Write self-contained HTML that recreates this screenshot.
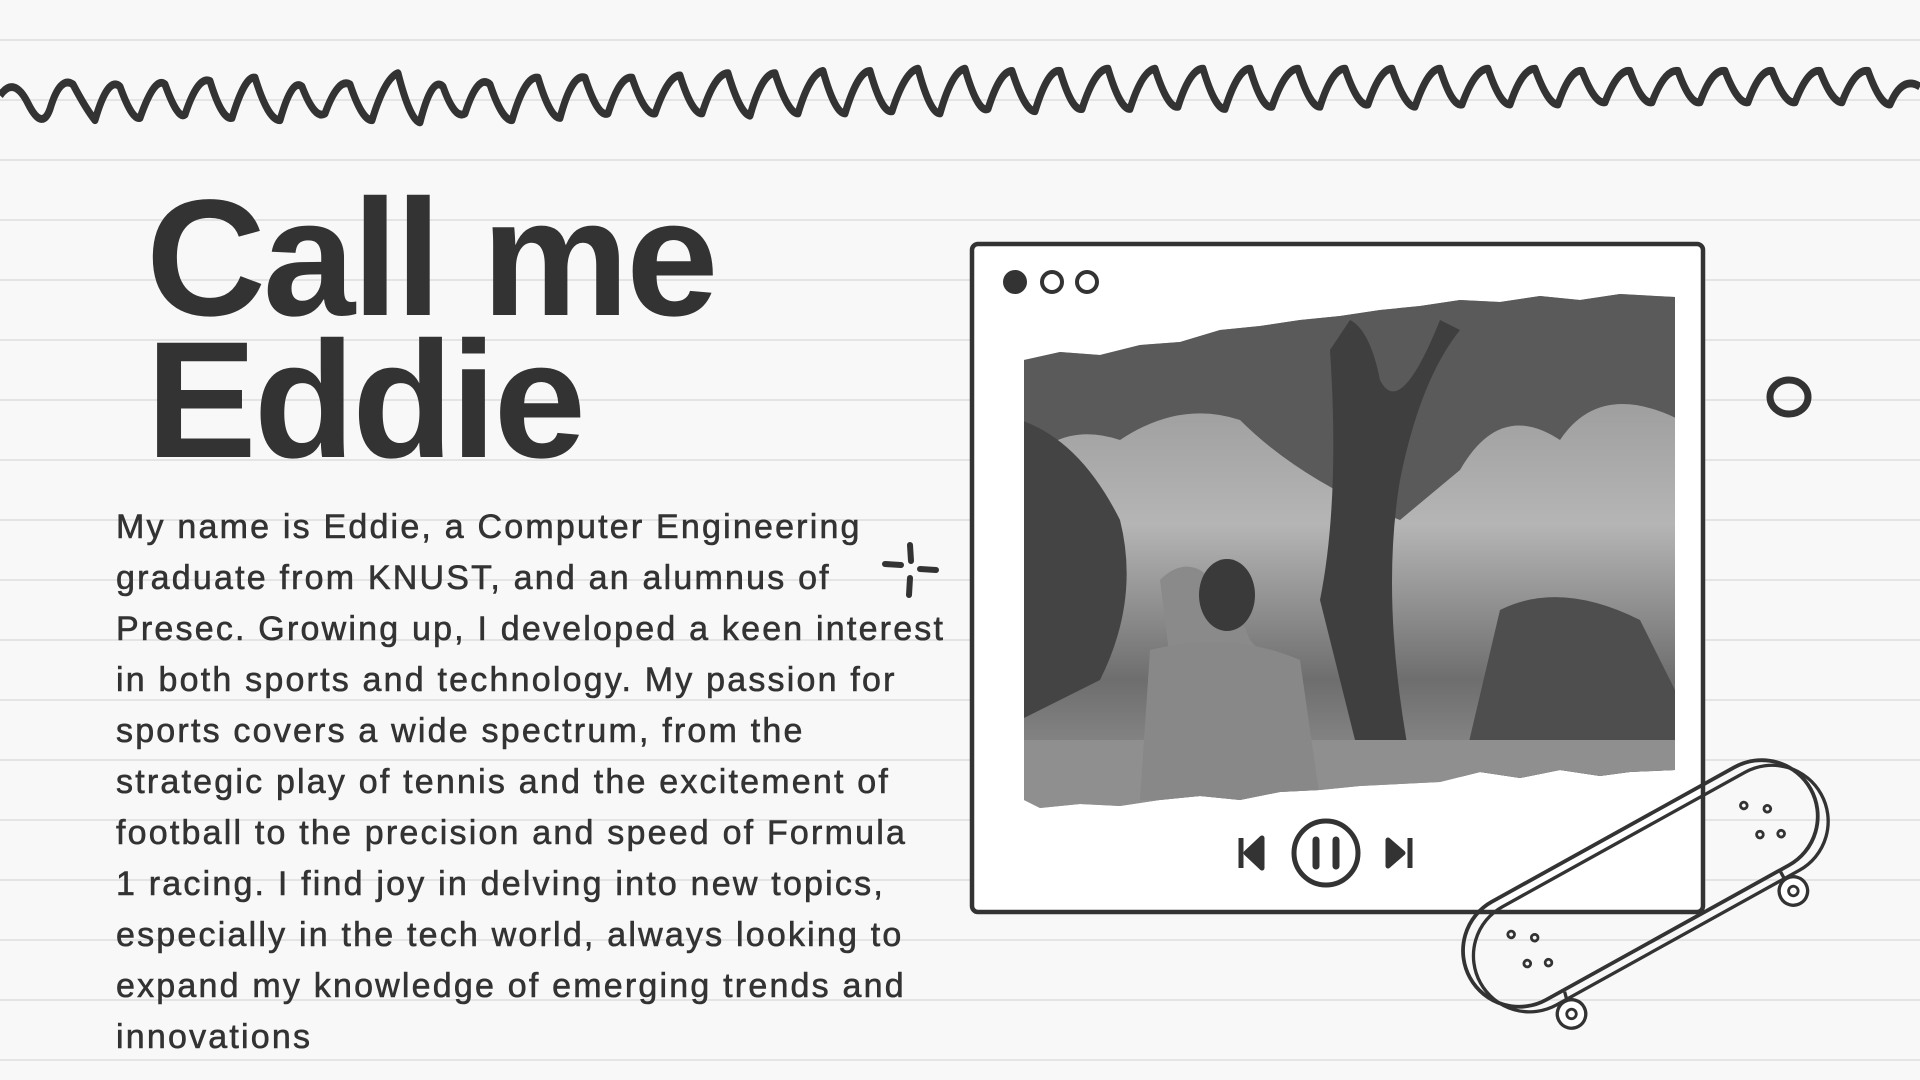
<!DOCTYPE html>
<html><head><meta charset="utf-8"><style>
html,body{margin:0;padding:0;}
body{width:1920px;height:1080px;position:relative;overflow:hidden;background:#f8f8f8;
background-image:repeating-linear-gradient(to bottom,transparent 0,transparent 39px,#e4e4e4 39px,#e4e4e4 41px,transparent 41px,transparent 60px);}
.t{position:absolute;left:146px;font-family:"Liberation Sans",sans-serif;font-weight:bold;color:#333;font-size:166px;letter-spacing:-3px;line-height:142px;top:188px;margin:0}
.b{position:absolute;left:116px;top:502px;font-family:"Liberation Sans",sans-serif;font-size:34px;line-height:51px;color:#333;letter-spacing:2.2px;white-space:nowrap;-webkit-text-stroke:0.6px #333}
svg{position:absolute;left:0;top:0}
</style></head><body>
<div class="t">Call me<br>Eddie</div>
<div class="b">My name is Eddie, a Computer Engineering<br>graduate from KNUST, and an alumnus of<br>Presec. Growing up, I developed a keen interest<br>in both sports and technology. My passion for<br>sports covers a wide spectrum, from the<br>strategic play of tennis and the excitement of<br>football to the precision and speed of Formula<br>1 racing. I find joy in delving into new topics,<br>especially in the tech world, always looking to<br>expand my knowledge of emerging trends and<br>innovations</div>
<svg width="1920" height="1080" viewBox="0 0 1920 1080">
<defs>
<linearGradient id="sky" x1="0" y1="0" x2="0" y2="1"><stop offset="0" stop-color="#8a8a8a"/><stop offset="0.45" stop-color="#b5b5b5"/><stop offset="0.75" stop-color="#6e6e6e"/><stop offset="1" stop-color="#9a9a9a"/></linearGradient>
<clipPath id="tear"><path d="M1024 360 L1060 352 L1100 355 L1140 345 L1180 342 L1220 330 L1260 326 L1300 320 L1340 316 L1380 310 L1420 306 L1460 300 L1500 302 L1540 296 L1580 300 L1620 294 L1675 297 L1675 770 L1630 772 L1600 776 L1560 770 L1520 778 L1480 772 L1440 782 L1400 784 L1360 786 L1320 790 L1280 792 L1240 800 L1200 796 L1160 800 L1120 806 L1080 804 L1040 808 L1024 800 Z"/></clipPath>
</defs>
<g transform="translate(0 -3) scale(1 1.12)">
<path fill="none" stroke="#333" stroke-width="7" stroke-linejoin="round" d="M0 88 Q14 70 28 95 Q42 120 50 100 Q60 70 73 78 Q86 100 95 110 Q108 70 120 80 Q132 110 140 108 Q155 70 165 78 Q178 110 185 105 Q198 70 210 75 Q222 110 232 108 Q245 70 255 72 Q268 110 280 110 Q292 72 302 80 Q315 110 325 104 Q338 72 350 78 Q362 110 372 110 Q385 72 398 68 Q410 110 420 112 Q432 70 443 80 Q455 110 465 104 Q478 68 490 78 Q502 110 512 110 Q525 70 538 72 Q550 108 560 108 Q572 68 585 72 Q598 108 608 104 Q620 70 632 72 Q645 106 655 104 Q668 70 680 70 Q692 104 702 104 Q715 68 728 68 Q740 104 750 106 Q762 68 775 68 Q788 104 798 104 Q810 68 823 66 Q835 104 845 104 Q858 66 870 66 Q882 104 892 102 Q905 66 918 64 Q930 104 940 104 Q952 66 965 64 Q978 104 988 100 Q1000 66 1012 66 Q1025 102 1035 102 Q1048 64 1060 66 Q1072 102 1082 100 Q1095 64 1108 64 Q1120 100 1130 100 Q1142 66 1155 64 Q1168 100 1178 98 Q1190 64 1203 64 Q1215 100 1225 100 Q1238 64 1250 64 Q1262 100 1272 98 Q1285 64 1298 64 Q1310 98 1320 98 Q1332 64 1345 64 Q1358 98 1368 96 Q1380 64 1392 64 Q1405 98 1415 98 Q1428 64 1440 64 Q1452 98 1462 96 Q1475 64 1488 64 Q1500 96 1510 96 Q1522 64 1535 64 Q1548 96 1558 96 Q1570 64 1582 66 Q1595 96 1605 94 Q1618 64 1630 66 Q1642 96 1652 94 Q1665 64 1678 66 Q1690 96 1700 94 Q1712 64 1725 66 Q1738 96 1748 94 Q1760 64 1772 66 Q1785 96 1795 94 Q1808 64 1820 66 Q1832 94 1842 94 Q1855 64 1868 66 Q1880 96 1890 96 Q1902 70 1920 80"/>
</g>
<path fill="none" stroke="#333" stroke-width="6" stroke-linecap="round" d="M910 545 L911 561 M885 564 L901 565 M920 569 L936 570 M910 578 L909 595"/>
<ellipse cx="1789" cy="397" rx="19" ry="17" fill="none" stroke="#333" stroke-width="7"/>
<rect x="972" y="244" width="731" height="668" rx="6" fill="#fff" stroke="#333" stroke-width="4.5"/>
<circle cx="1015" cy="282" r="12" fill="#333"/>
<circle cx="1052" cy="282" r="10" fill="none" stroke="#333" stroke-width="4"/>
<circle cx="1087" cy="282" r="10" fill="none" stroke="#333" stroke-width="4"/>
<g clip-path="url(#tear)">
<rect x="1020" y="290" width="660" height="520" fill="url(#sky)"/>
<path d="M1020 290 L1680 290 L1680 420 Q1600 380 1560 440 Q1500 400 1460 470 L1400 520 Q1300 480 1240 420 Q1180 400 1120 440 Q1060 420 1020 470 Z" fill="#5a5a5a"/>
<path d="M1020 420 Q1080 440 1120 520 Q1140 600 1100 680 L1020 720 Z" fill="#444"/>
<path d="M1330 350 Q1340 500 1320 600 L1360 760 L1410 760 Q1380 600 1400 480 Q1420 380 1460 330 L1440 320 Q1400 420 1380 380 Q1370 330 1350 320 Z" fill="#3f3f3f"/>
<path d="M1500 610 Q1560 580 1640 620 L1680 700 L1680 780 L1460 780 Z" fill="#4e4e4e"/>
<path d="M1160 580 Q1180 560 1200 570 Q1230 590 1250 640 Q1290 680 1300 790 L1140 800 Q1145 700 1170 660 Z" fill="#8a8a8a"/>
<ellipse cx="1227" cy="595" rx="28" ry="36" fill="#3a3a3a"/>
<rect x="1020" y="740" width="660" height="70" fill="#8f8f8f"/>
<path d="M1150 650 Q1230 630 1300 660 L1320 800 L1140 800 Z" fill="#888"/>
</g>
<path d="M1241 838 L1241 868 M1262 838 L1246 853 L1262 868 Z" fill="#333" stroke="#333" stroke-width="5" stroke-linejoin="round"/>
<circle cx="1326" cy="853" r="32" fill="none" stroke="#333" stroke-width="5"/>
<path d="M1316 840 L1316 866 M1336 840 L1336 866" stroke="#333" stroke-width="7" stroke-linecap="round"/>
<path d="M1388 840 L1403 853 L1388 866 Z M1410 838 L1410 868" fill="#333" stroke="#333" stroke-width="5" stroke-linejoin="round"/>
<g transform="translate(1645 882) rotate(-29) scale(0.95)">
<line x1="-130" y1="60" x2="-135" y2="80" stroke="#333" stroke-width="3.5"/>
<line x1="130" y1="60" x2="130" y2="80" stroke="#333" stroke-width="3.5"/>
<circle cx="-135" cy="84" r="15" fill="#fff" stroke="#333" stroke-width="3.5"/>
<circle cx="-135" cy="84" r="5" fill="none" stroke="#333" stroke-width="3"/>
<circle cx="132" cy="84" r="15" fill="#fff" stroke="#333" stroke-width="3.5"/>
<circle cx="132" cy="84" r="5" fill="none" stroke="#333" stroke-width="3"/>
<rect x="-203" y="-50" width="410" height="118" rx="59" fill="none" stroke="#333" stroke-width="3.5"/>
<rect x="-210" y="-60" width="410" height="118" rx="59" fill="none" stroke="#333" stroke-width="4"/>
<g fill="none" stroke="#333" stroke-width="3">
<circle cx="-150" cy="-20" r="3.5"/><circle cx="-130" cy="-5" r="3.5"/><circle cx="-150" cy="15" r="3.5"/><circle cx="-130" cy="25" r="3.5"/>
<circle cx="130" cy="-20" r="3.5"/><circle cx="150" cy="-5" r="3.5"/><circle cx="130" cy="15" r="3.5"/><circle cx="150" cy="25" r="3.5"/>
</g>
</g>
</svg>
</body></html>
